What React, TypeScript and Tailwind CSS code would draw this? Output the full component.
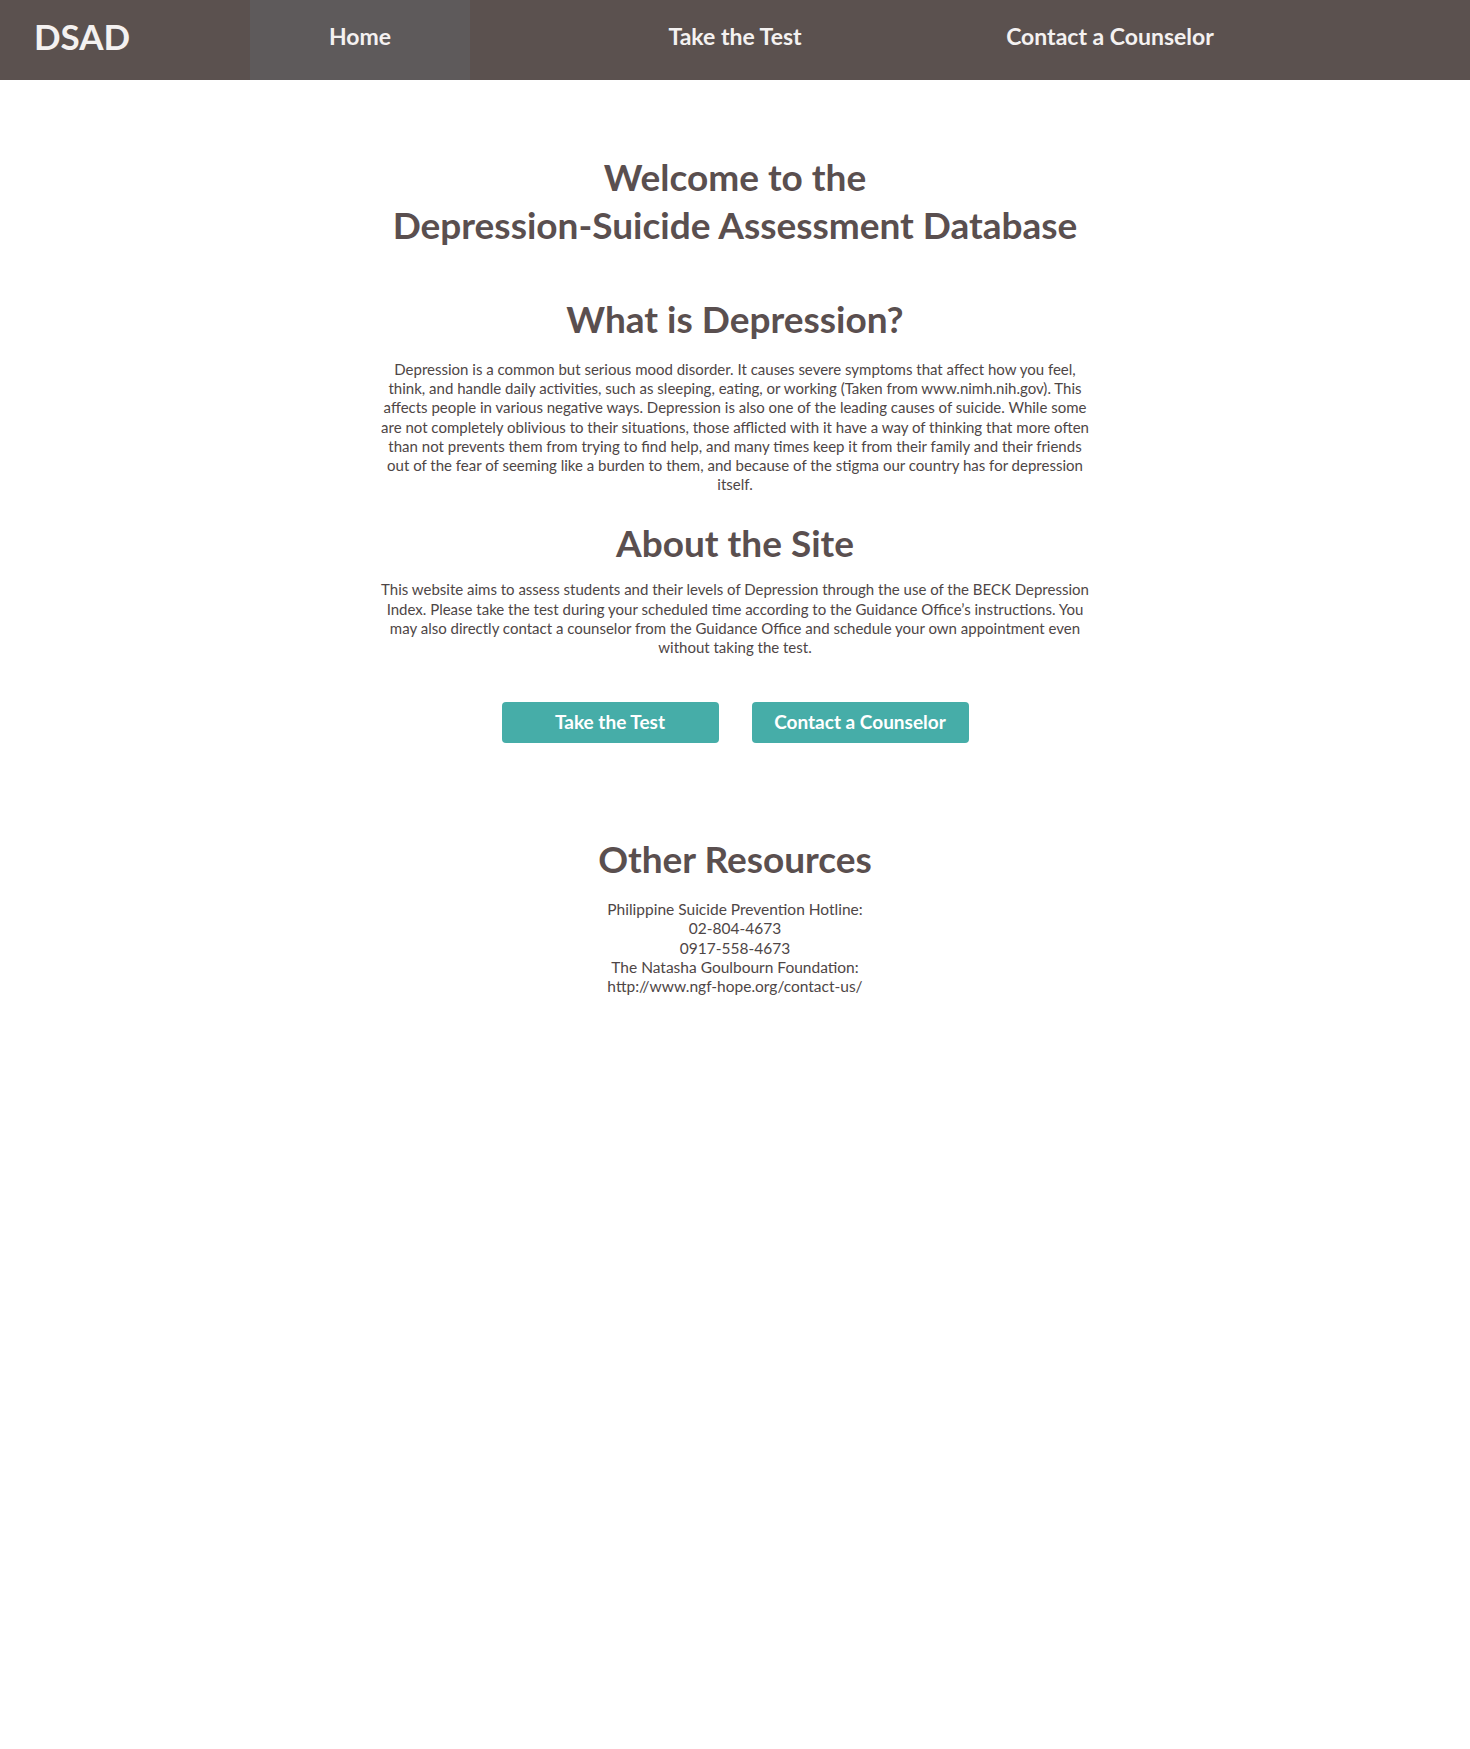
import React from "react";

const navLinks = ["Home", "Take the Test", "Contact a Counselor"];

export default function App() {
  return (
    <div className="min-h-[1749px] bg-white font-['Lato','Liberation_Sans',sans-serif] text-[#5a4f4f]">
      <nav className="flex h-20 items-stretch bg-[#5b514f] text-[#f4f1f1]">
        <div className="flex w-[250px] items-center pb-[8px] pl-[34px] text-[35px] font-bold">DSAD</div>
        <ul className="flex gap-[155px]">
          {navLinks.map((label, i) => (
            <li
              key={label}
              className={`flex w-[220px] items-center justify-center pb-[8px] text-[23px] font-bold ${i === 0 ? "bg-[#5e5a5b]" : ""}`}
            >
              {label}
            </li>
          ))}
        </ul>
      </nav>

      <main className="mx-auto flex w-[760px] flex-col items-center text-center">
        <h1 className="mt-[73px] text-[37px] font-bold leading-[48px]">
          Welcome to the
          <br />
          Depression-Suicide Assessment Database
        </h1>

        <h2 className="mt-[50px] text-[37px] font-bold leading-[40px]">What is Depression?</h2>
        <p className="mt-[21px] whitespace-nowrap text-[15px] leading-[19.2px] text-[#4e4646]">
          Depression is a common but serious mood disorder. It causes severe symptoms that affect how you feel,
          <br />
          think, and handle daily activities, such as sleeping, eating, or working (Taken from www.nimh.nih.gov). This
          <br />
          affects people in various negative ways. Depression is also one of the leading causes of suicide. While some
          <br />
          are not completely oblivious to their situations, those afflicted with it have a way of thinking that more often
          <br />
          than not prevents them from trying to find help, and many times keep it from their family and their friends
          <br />
          out of the fear of seeming like a burden to them, and because of the stigma our country has for depression
          <br />
          itself.
        </p>

        <h2 className="mt-[29px] text-[37px] font-bold leading-[40px]">About the Site</h2>
        <p className="mt-[17px] whitespace-nowrap text-[15px] leading-[19.2px] text-[#4e4646]">
          This website aims to assess students and their levels of Depression through the use of the BECK Depression
          <br />
          Index. Please take the test during your scheduled time according to the Guidance Office’s instructions. You
          <br />
          may also directly contact a counselor from the Guidance Office and schedule your own appointment even
          <br />
          without taking the test.
        </p>

        <div className="mt-[45px] flex gap-[33px]">
          <button className="h-[41px] w-[217px] rounded-[4px] bg-[#46ada8] text-[19px] font-bold text-white">
            Take the Test
          </button>
          <button className="h-[41px] w-[217px] rounded-[4px] bg-[#46ada8] text-[19px] font-bold text-white">
            Contact a Counselor
          </button>
        </div>

        <h2 className="mt-[96px] text-[37px] font-bold leading-[40px]">Other Resources</h2>
        <div className="mt-[21px] text-[15.5px] leading-[19.25px] text-[#4e4646]">
          <p>Philippine Suicide Prevention Hotline:</p>
          <p>02-804-4673</p>
          <p>0917-558-4673</p>
          <p>The Natasha Goulbourn Foundation:</p>
          <p>http://www.ngf-hope.org/contact-us/</p>
        </div>
      </main>
    </div>
  );
}
